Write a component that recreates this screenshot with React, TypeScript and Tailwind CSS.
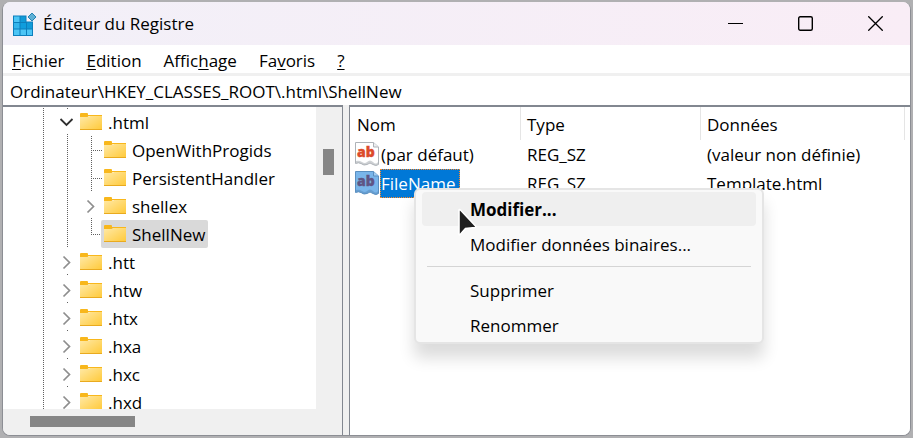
import type { ReactNode } from "react";

type Guide = "none" | "line" | "branch" | "elbow" | "open" | "closed";

type TreeNode = { name: string; guides: Guide[]; selected?: boolean };

const nodes: TreeNode[] = [
  { name: ".html", guides: ["line", "open"] },
  { name: "OpenWithProgids", guides: ["line", "line", "branch"] },
  { name: "PersistentHandler", guides: ["line", "line", "branch"] },
  { name: "shellex", guides: ["line", "line", "closed"] },
  { name: "ShellNew", guides: ["line", "line", "elbow"], selected: true },
  { name: ".htt", guides: ["line", "closed"] },
  { name: ".htw", guides: ["line", "closed"] },
  { name: ".htx", guides: ["line", "closed"] },
  { name: ".hxa", guides: ["line", "closed"] },
  { name: ".hxc", guides: ["line", "closed"] },
  { name: ".hxd", guides: ["line", "closed"] },
];

const values = [
  { name: "(par défaut)", type: "REG_SZ", data: "(valeur non définie)", selected: false },
  { name: "FileName", type: "REG_SZ", data: "Template.html", selected: true },
];

function RegistryIcon() {
  return (
    <svg width="24" height="24" viewBox="0 0 24 24" aria-hidden="true">
      <path d="M0 3.500h13.500v6H20V24H0z" fill="#0c7fbd" />
      <g fill="#4cc5f5">
        <rect x="1" y="4.500" width="5.500" height="5.500" />
        <rect x="1" y="11" width="5.500" height="5.500" fill="#35b5ec" />
        <rect x="7.500" y="11" width="5.500" height="5.500" fill="#0f9ddd" />
        <rect x="14" y="10.500" width="5" height="6" fill="#109ad8" />
        <rect x="7.500" y="4.500" width="5" height="5.500" fill="#109ad8" />
        <rect x="1" y="17.500" width="5.500" height="5.500" />
        <rect x="7.500" y="17.500" width="5.500" height="5.500" />
        <rect x="14" y="17.500" width="5" height="5.500" />
      </g>
      <path d="M19 1l4 4-4 4-4-4z" fill="#5fb0d6" stroke="#2583b2" />
    </svg>
  );
}

function FolderIcon() {
  return (
    <svg width="22" height="18" viewBox="0 0 22 18" className="shrink-0" aria-hidden="true">
      <defs>
        <linearGradient id="folder" x1="0" y1="0" x2="1" y2="1">
          <stop offset="0" stopColor="#ffe9a6" />
          <stop offset="1" stopColor="#ffc938" />
        </linearGradient>
      </defs>
      <path d="M0 4h8.500L10 3h12v14H0z" fill="url(#folder)" />
      <path d="M0 1q0-1 1-1h6q1 0 1 1v1h14v1H9L7.500 4H0z" fill="#f8b71c" />
      <path d="M0 16h22v1H0z" fill="#e9aa1f" />
    </svg>
  );
}

function StringIcon({ selected }: { selected: boolean }) {
  const paper = selected ? "#79b5ea" : "#fff";
  const edge = selected ? "#5a8fc0" : "#aeb3b8";
  const ink = selected ? "#5f5585" : "#dc4b2b";
  return (
    <svg width="25" height="25" viewBox="0 0 25 25" className="shrink-0" aria-hidden="true">
      <path
        d="M1 .5h17.500L23.500 5v17.500q-2.500 2-5.500 0-3-3-6 0-3 1.500-6-1-2.500-1.500-5.500 0V.5z"
        fill={paper}
        stroke={edge}
      />
      <path d="M1 19q3-1 6 1t5 0q3-3 6 0t5 0v2.500q-2.500 2-5 0-3-3-6 0-3 1.500-6-1-2.500-1-5 0z" fill={edge} opacity=".6" />
      <path d="M18.500.5V5h5" fill={selected ? "#a3cdf2" : "#eceef0"} stroke={edge} />
      <text x="2" y="15" fontSize="14" fontWeight="800" fill={ink} stroke={ink} strokeWidth=".4">
        ab
      </text>
    </svg>
  );
}

function GuideCell({ kind }: { kind: Guide }) {
  return (
    <svg width="24" height="28" viewBox="0 0 24 28" className="shrink-0" aria-hidden="true">
      <g stroke="#606060" strokeDasharray="1 1" fill="none">
        {(kind === "line" || kind === "branch") && <path d="M12.500 0v28" />}
        {kind === "elbow" && <path d="M12.500 0v14" />}
        {(kind === "branch" || kind === "elbow") && <path d="M12 14.500h11" />}
        {kind === "open" && <path d="M12.500 0v1" />}
        {(kind === "open" || kind === "closed") && <path d="M12.500 26v2" />}
      </g>
      {kind === "open" && <path d="M5.500 11l6 6 6-6" fill="none" stroke="#303030" strokeWidth="1.800" />}
      {kind === "closed" && <path d="M8.500 8.500l6 6-6 6" fill="none" stroke="#8e8e8e" strokeWidth="1.700" />}
    </svg>
  );
}

function MenuItem({ children, strong }: { children: ReactNode; strong?: boolean }) {
  return (
    <button
      type="button"
      role="menuitem"
      className={
        strong
          ? "h-[34px] rounded bg-[#efefef] pt-0.5 pl-12 text-left font-bold"
          : "h-[34px] rounded pt-0.5 pl-12 text-left"
      }
    >
      {children}
    </button>
  );
}

export default function App() {
  return (
    <div className="h-screen bg-[#b0b0b2] p-[2px] font-['Open_Sans',sans-serif] text-[17px] leading-6 text-black">
      <main className="flex h-full flex-col overflow-hidden rounded-lg border-x border-b border-[#8c8e94] bg-[#f0f0f0]">
        <header className="flex h-[43px] shrink-0 items-center bg-linear-to-r from-[#f2f0f8] to-[#f9edf6] pl-[10px]">
          <RegistryIcon />
          <h1 className="ml-1.5 flex-1">Éditeur du Registre</h1>
          <div className="flex h-full">
            <button type="button" aria-label="Réduire" className="grid w-[70px] place-items-center">
              <svg width="15" height="15" viewBox="0 0 15 15"><path d="M0 7.500h15" stroke="#000" /></svg>
            </button>
            <button type="button" aria-label="Agrandir" className="grid w-[70px] place-items-center">
              <svg width="15" height="15" viewBox="0 0 15 15" fill="none"><rect x=".7" y=".7" width="13.600" height="13.600" rx="1.500" stroke="#000" strokeWidth="1.400" /></svg>
            </button>
            <button type="button" aria-label="Fermer" className="grid w-[70px] place-items-center">
              <svg width="15" height="15" viewBox="0 0 15 15"><path d="M.3.3l14.400 14.400M14.700.3L.3 14.700" stroke="#000" strokeWidth="1.300" /></svg>
            </button>
          </div>
        </header>

        <nav className="flex h-7 shrink-0 items-center gap-[22px] bg-white pt-1 pl-[9px]">
          <button type="button"><u className="underline-offset-2">F</u>ichier</button>
          <button type="button"><u className="underline-offset-2">E</u>dition</button>
          <button type="button">Affic<u className="underline-offset-2">h</u>age</button>
          <button type="button">Fa<u className="underline-offset-2">v</u>oris</button>
          <button type="button"><u className="underline-offset-2">?</u></button>
        </nav>

        <input
          type="text"
          aria-label="Chemin de la clé"
          defaultValue={"Ordinateur\\HKEY_CLASSES_ROOT\\.html\\ShellNew"}
          className="mt-[3px] h-[29px] w-full shrink-0 bg-white pt-0.5 pl-[7px] outline-none"
        />

        <div className="flex min-h-0 flex-1">
          <section className="flex w-[340px] shrink-0 flex-col border-t-2 border-r border-[#828790]">
            <div className="flex min-h-0 flex-1">
              <ul className="min-w-0 flex-1 overflow-hidden bg-white pt-px pl-7" role="tree" aria-label="Clés">
                {nodes.map((node) => (
                  <li key={node.name} role="treeitem" aria-selected={!!node.selected} className="flex h-7 items-center">
                    {node.guides.map((kind, i) => (
                      <GuideCell key={i} kind={kind} />
                    ))}
                    <span
                      className={
                        node.selected
                          ? "-ml-0.5 flex h-7 items-center rounded-xs bg-[#d9d9d9] pr-[3px] pl-[3px]"
                          : "-ml-0.5 flex h-7 items-center pr-[3px] pl-[3px]"
                      }
                    >
                      <FolderIcon />
                      <span className="ml-1.5 pt-0.5">{node.name}</span>
                    </span>
                  </li>
                ))}
              </ul>
              <div className="w-[26px] shrink-0 bg-[#f0f0f0] pt-[42px] pl-[7px]">
                <div className="h-[26px] w-[11px] bg-[#868686]" />
              </div>
            </div>
            <div className="h-[26px] shrink-0 bg-[#f0f0f0] pt-[7px] pl-[27px]">
              <div className="h-[11px] w-[105px] bg-[#868686]" />
            </div>
          </section>

          <div className="w-[6px] shrink-0 bg-[#f0f0f0]" />

          <section className="relative min-w-0 flex-1 border-t-2 border-l border-[#828790] bg-white">
            <table className="w-full table-fixed border-separate border-spacing-0 text-left">
              <colgroup>
                <col className="w-[171px]" />
                <col className="w-[180px]" />
                <col />
                <col className="w-[5px]" />
              </colgroup>
              <thead>
                <tr className="h-[33px]">
                  <th className="border-r border-[#e5e5e5] p-0 pt-0.5 pl-[7px] font-normal">Nom</th>
                  <th className="border-r border-[#e5e5e5] p-0 pt-0.5 pl-1.5 font-normal">Type</th>
                  <th className="border-r border-[#e5e5e5] p-0 pt-0.5 pl-1.5 font-normal">Données</th>
                  <td className="p-0" />
                </tr>
              </thead>
              <tbody>
                {values.map((value) => (
                  <tr key={value.name} className="h-[29px]">
                    <td className="p-0 pl-[5px]">
                      <div className="flex items-center">
                        <StringIcon selected={value.selected} />
                        <span
                          className={
                            value.selected
                              ? "h-[29px] border border-dotted border-[#ff8a28] bg-[#0078d7] pt-0.5 pr-1 text-white"
                              : "h-[29px] border border-transparent pt-0.5 pr-1"
                          }
                        >
                          {value.name}
                        </span>
                      </div>
                    </td>
                    <td className="p-0 pl-1.5">{value.type}</td>
                    <td className="p-0 pl-1.5">{value.data}</td>
                    <td className="p-0" />
                  </tr>
                ))}
              </tbody>
            </table>

            <div
              role="menu"
              className="absolute top-[81px] left-16 flex w-[350px] flex-col gap-px rounded-md border-2 border-[#e5e5e5] bg-[#f9f9f9] px-1.5 pt-0.5 shadow-[0_14px_16px_rgba(0,0,0,0.14)]"
            >
              <MenuItem strong>Modifier...</MenuItem>
              <MenuItem>Modifier données binaires...</MenuItem>
              <hr className="mx-[5px] mt-1 mb-[5px] border-[#d5d5d5]" />
              <MenuItem>Supprimer</MenuItem>
              <MenuItem>Renommer</MenuItem>
              <svg
                width="22"
                height="30"
                viewBox="0 0 22 30"
                className="absolute top-[18px] left-[41px]"
                aria-hidden="true"
              >
                <path d="M2 2.500v23.500q0 1.500 1.200.5l5.300-6 9.500-1q1.500-.3.500-1.500L3.500 2q-1.500-1-1.500.5z" fill="#1f1f1f" stroke="#fff" strokeWidth="1.600" />
              </svg>
            </div>
          </section>
        </div>
      </main>
    </div>
  );
}
